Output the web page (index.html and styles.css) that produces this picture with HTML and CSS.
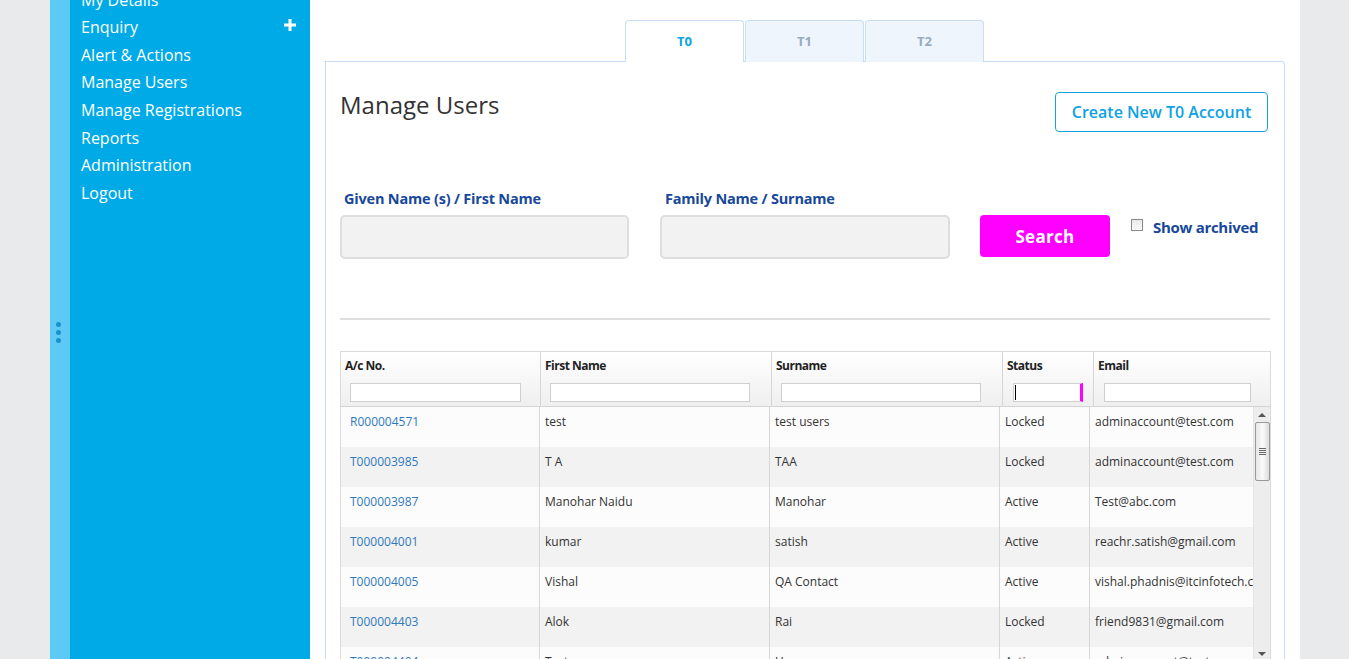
FILE: index.html
```html
<!DOCTYPE html>
<html lang="en">
<head>
<meta charset="utf-8">
<title>Manage Users</title>
<link rel="stylesheet" href="styles.css">
</head>
<body>
<div class="page">
  <div class="gutter"></div>
  <aside class="sidebar">
    <div class="strip">
      <span class="dot"></span><span class="dot"></span><span class="dot"></span>
    </div>
    <nav class="nav">
      <a class="nav-item">My Details</a>
      <a class="nav-item has-sub">Enquiry
        <svg class="plus" width="12" height="12" viewBox="0 0 12 12"><path d="M6 0v12M0 6h12" stroke="#fff" stroke-width="3"/></svg>
      </a>
      <a class="nav-item">Alert &amp; Actions</a>
      <a class="nav-item">Manage Users</a>
      <a class="nav-item">Manage Registrations</a>
      <a class="nav-item">Reports</a>
      <a class="nav-item">Administration</a>
      <a class="nav-item">Logout</a>
    </nav>
  </aside>
  <main class="main">
    <div class="tabs">
      <div class="tab active">T0</div>
      <div class="tab">T1</div>
      <div class="tab">T2</div>
    </div>
    <section class="panel">
      <div class="panel-head">
        <h1 class="title">Manage Users</h1>
        <button class="btn-outline">Create New T0 Account</button>
      </div>
      <div class="search-row">
        <div class="field">
          <label class="field-label">Given Name (s) / First Name</label>
          <input class="field-input" type="text">
        </div>
        <div class="field field-2">
          <label class="field-label">Family Name / Surname</label>
          <input class="field-input" type="text">
        </div>
        <button class="btn-search">Search</button>
        <label class="archived"><span class="checkbox"></span>Show archived</label>
      </div>
      <hr class="divider">
      <div class="grid">
        <div class="grid-head">
          <div class="hcell"><span class="htext">A/c No.</span><span class="filter w171"></span></div>
          <div class="hcell"><span class="htext">First Name</span><span class="filter w200"></span></div>
          <div class="hcell"><span class="htext">Surname</span><span class="filter w200"></span></div>
          <div class="hcell"><span class="htext">Status</span><span class="filter w70 focused"><span class="caret"></span></span></div>
          <div class="hcell last"><span class="htext">Email</span><span class="filter w147"></span></div>
        </div>
        <div class="grid-body">
          <div class="rows">
            <div class="row"><div class="cell c1"><a class="link">R000004571</a></div><div class="cell">test</div><div class="cell">test users</div><div class="cell">Locked</div><div class="cell c5">adminaccount@test.com</div></div>
            <div class="row alt"><div class="cell c1"><a class="link">T000003985</a></div><div class="cell">T A</div><div class="cell">TAA</div><div class="cell">Locked</div><div class="cell c5">adminaccount@test.com</div></div>
            <div class="row"><div class="cell c1"><a class="link">T000003987</a></div><div class="cell">Manohar Naidu</div><div class="cell">Manohar</div><div class="cell">Active</div><div class="cell c5">Test@abc.com</div></div>
            <div class="row alt"><div class="cell c1"><a class="link">T000004001</a></div><div class="cell">kumar</div><div class="cell">satish</div><div class="cell">Active</div><div class="cell c5">reachr.satish@gmail.com</div></div>
            <div class="row"><div class="cell c1"><a class="link">T000004005</a></div><div class="cell">Vishal</div><div class="cell">QA Contact</div><div class="cell">Active</div><div class="cell c5">vishal.phadnis@itcinfotech.com</div></div>
            <div class="row alt"><div class="cell c1"><a class="link">T000004403</a></div><div class="cell">Alok</div><div class="cell">Rai</div><div class="cell">Locked</div><div class="cell c5">friend9831@gmail.com</div></div>
            <div class="row"><div class="cell c1"><a class="link">T000004404</a></div><div class="cell">Test</div><div class="cell">User</div><div class="cell">Active</div><div class="cell c5">admin.account@test.com</div></div>
          </div>
          <div class="scrollbar">
            <span class="arrow up"></span>
            <span class="thumb"><span class="grip"></span></span>
            <span class="track"></span>
            <span class="arrow down"></span>
          </div>
        </div>
      </div>
    </section>
  </main>
  <div class="right"></div>
</div>
</body>
</html>
```

FILE: styles.css
```css
* { box-sizing: border-box; }
html, body { margin: 0; padding: 0; height: 100%; overflow: hidden; }
body { font-family: "Open Sans", "Noto Sans", sans-serif; color: #333; background: #e9eaec; }

.page { display: flex; height: 659px; overflow: hidden; }
.gutter { width: 50px; flex: none; background: #e9eaec; }

.sidebar { display: flex; flex: none; width: 260px; background: #00aae6; }
.strip { width: 20px; background: #5dc9f5; display: flex; flex-direction: column; align-items: center; justify-content: center; gap: 3px; padding-top: 6px; padding-right: 4px; }
.dot { width: 5px; height: 5px; border-radius: 50%; background: #1b8fd1; }
.nav { flex: 1; display: flex; flex-direction: column; margin-top: -13.4px; }
.nav-item { position: relative; display: block; color: #fff; font-size: 16px; line-height: 27.6px; padding-left: 11px; }
.plus { position: absolute; right: 14px; top: 5px; }

.main { width: 990px; flex: none; background: #fff; padding: 20px 15px 0 15px; }
.right { flex: 1; background: #e9eaec; }

.tabs { display: flex; justify-content: center; gap: 1px; margin-bottom: -1px; padding-right: 1px; position: relative; z-index: 1; }
.tab { width: 119px; height: 42px; border: 1px solid #c7ddf3; border-bottom: none; border-radius: 4px 4px 0 0; background: #eef5fd; color: #99abc0; font-weight: 700; font-size: 13px; display: flex; align-items: center; justify-content: center; padding-bottom: 1px; }
.tab.active { background: #fff; color: #0aa3e3; }

.panel { border: 1px solid #c7ddf3; border-radius: 0 4px 0 0; border-bottom: none; padding: 0 15px 0 14px; height: 620px; }
.panel-head { display: flex; justify-content: space-between; align-items: flex-start; padding-top: 30px; }
.title { margin: 0; font-weight: 400; font-size: 24px; line-height: 26px; color: #333; }
.btn-outline { width: 213px; height: 40px; border: 1px solid #15a4e1; border-radius: 4px; background: #fff; color: #0ea2e2; font-family: "Open Sans", sans-serif; font-weight: 600; font-size: 16px; padding: 0; margin-right: 1px; }

.search-row { display: flex; align-items: flex-start; margin-top: 57px; }
.field { width: 289px; display: flex; flex-direction: column; }
.field-2 { margin-left: 31px; width: 290px; }
.field-label { font-weight: 700; font-size: 14.5px; line-height: 20px; color: #17489a; padding-left: 4px; margin-bottom: 6px; letter-spacing: -0.2px; }
.field-2 .field-label { padding-left: 5px; }
.field-input { height: 44px; background: #f2f2f2; border: 2px solid #dedede; border-radius: 5px; }
.btn-search { margin-left: 30px; margin-top: 26px; width: 130px; height: 42px; background: #ff00ff; border: none; border-radius: 4px; color: #fff; font-family: "Open Sans", sans-serif; font-weight: 700; font-size: 17px; letter-spacing: 0.3px; }
.archived { display: flex; align-items: center; margin-left: 21px; margin-top: 28px; font-weight: 700; font-size: 15px; line-height: 20px; color: #17489a; letter-spacing: -0.3px; }
.checkbox { width: 12px; height: 12px; border: 1px solid #8a8a8a; background: linear-gradient(#e8e8e8, #fafafa); margin-right: 10px; margin-top: -4px; }

.divider { margin: 59px 0 0 0; height: 2px; border: none; background: #dedede; width: 930px; }

.grid { margin-top: 31px; width: 931px; border: 1px solid #dadada; border-bottom: none; }
.grid-head { display: grid; grid-template-columns: 200px 231px 231px 91px 176px; height: 55px; background: linear-gradient(#ffffff, #efefef); border-bottom: 1px solid #d4d4d4; }
.hcell { border-right: 1px solid #d6d6d6; display: flex; flex-direction: column; padding: 6px 0 0 4px; }
.hcell.last { border-right: none; }
.htext { font-weight: 700; font-size: 12px; line-height: 16px; color: #222; letter-spacing: -0.5px; }
.filter { display: block; height: 19px; margin-top: 9px; margin-left: 5px; background: #fff; border: 1px solid #cfcfcf; position: relative; }
.w171 { width: 171px; }
.w200 { width: 200px; }
.w70 { width: 70px; margin-left: 6px; border-right: 3px solid #ff00ff; }
.w147 { width: 147px; margin-left: 6px; }
.caret { position: absolute; left: 1px; top: 1px; width: 1px; height: 15px; background: #000; }

.grid-body { display: flex; height: 253px; overflow: hidden; }
.rows { width: 912px; display: flex; flex-direction: column; }
.row { display: grid; grid-template-columns: 199px 230px 230px 90px 163px; height: 40px; flex: none; background: #fcfcfc; font-size: 12px; line-height: 16px; color: #333; }
.row.alt { background: #f2f2f2; }
.cell { border-right: 1px solid #d6d6d6; padding: 7px 0 0 5px; white-space: nowrap; overflow: hidden; }
.cell.c1 { padding-left: 9px; }
.cell.c5 { border-right: none; }
.link { color: #2f79bd; }

.scrollbar { width: 17px; flex: none; display: flex; flex-direction: column; align-items: center; background: #ededed; border-left: 1px solid #e4e4e4; }
.arrow { width: 0; height: 0; border-left: 4px solid transparent; border-right: 4px solid transparent; margin: 6px 0 5px; }
.arrow.up { border-bottom: 4px solid #555; }
.arrow.down { border-top: 4px solid #555; margin: 0 0 4px; }
.thumb { width: 15px; height: 59px; border: 1px solid #999; border-radius: 2px; background: linear-gradient(90deg, #e6e6e6, #fafafa 50%, #dcdcdc); display: flex; align-items: center; justify-content: center; }
.grip { width: 7px; height: 7px; background: repeating-linear-gradient(#666 0 1px, transparent 1px 2px); }
.track { flex: 1; }
```
